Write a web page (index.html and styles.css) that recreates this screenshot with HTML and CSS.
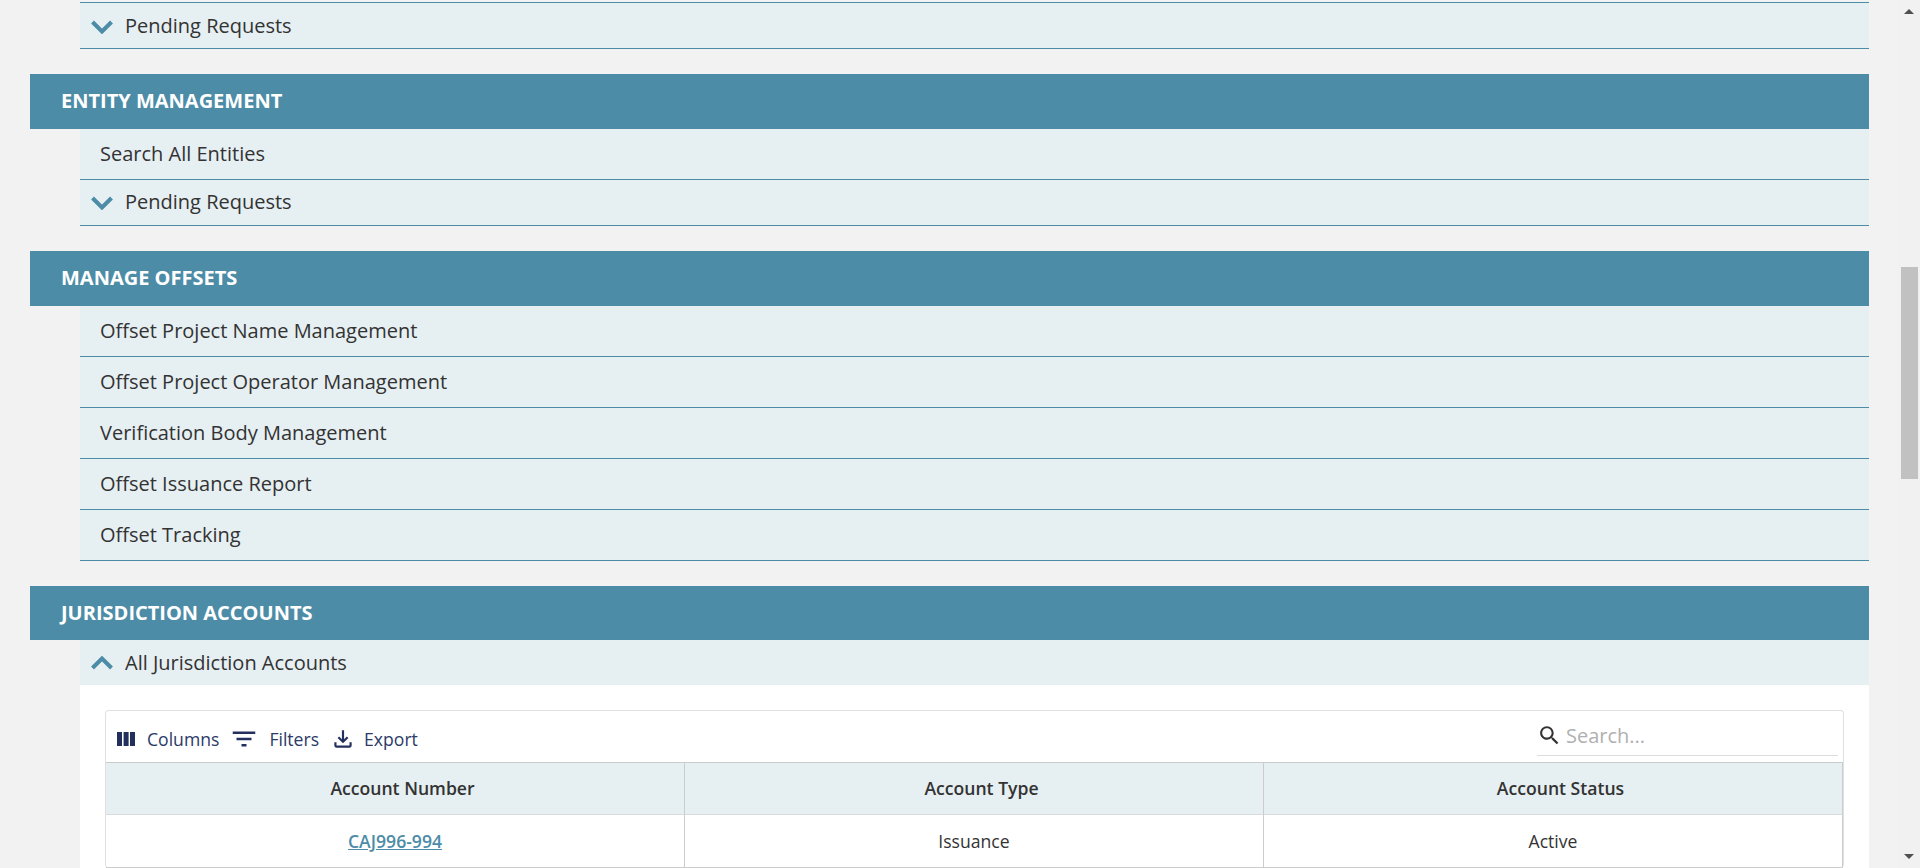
FILE: index.html
```html
<!DOCTYPE html>
<html lang="en">
<head>
<meta charset="utf-8">
<title>Jurisdiction Administration</title>
<link rel="stylesheet" href="styles.css">
</head>
<body>
<div class="page">
  <main class="content">
    <ul class="rows rows-first">
      <li class="row row-toggle"><svg class="chev" viewBox="0 0 22 14"><path d="M1.5 2L11 11.5 20.5 2"/></svg><span>Pending Requests</span></li>
    </ul>
    <section class="group">
      <h2 class="group-title">ENTITY MANAGEMENT</h2>
      <ul class="rows">
        <li class="row">Search All Entities</li>
        <li class="row row-toggle"><svg class="chev" viewBox="0 0 22 14"><path d="M1.5 2L11 11.5 20.5 2"/></svg><span>Pending Requests</span></li>
      </ul>
    </section>
    <section class="group">
      <h2 class="group-title">MANAGE OFFSETS</h2>
      <ul class="rows">
        <li class="row">Offset Project Name Management</li>
        <li class="row">Offset Project Operator Management</li>
        <li class="row">Verification Body Management</li>
        <li class="row">Offset Issuance Report</li>
        <li class="row">Offset Tracking</li>
      </ul>
    </section>
    <section class="group">
      <h2 class="group-title">JURISDICTION ACCOUNTS</h2>
      <div class="row row-toggle row-open"><svg class="chev" viewBox="0 0 22 14"><path d="M1.5 12L11 2.5 20.5 12"/></svg><span>All Jurisdiction Accounts</span></div>
      <div class="panel">
        <div class="grid">
          <div class="toolbar">
            <div class="tools">
              <button class="tool"><svg class="tool-icon" viewBox="0 0 24 24"><path d="M3 5h5v14H3zM9.6 5h5v14h-5zM16 5h5v14h-5z"/></svg>Columns</button>
              <button class="tool"><svg class="tool-icon tool-filter" viewBox="0 0 24 24"><path d="M10 18h4v-2h-4v2zM3 6v2h18V6H3zm3 7h12v-2H6v2z"/></svg>Filters</button>
              <button class="tool"><svg class="tool-icon tool-export" viewBox="0 0 24 24"><path d="M18 15v3H6v-3H4v3c0 1.1.9 2 2 2h12c1.1 0 2-.9 2-2v-3h-2zm-1-4l-1.41-1.41L13 12.17V4h-2v8.17L8.41 9.59 7 11l5 5 5-5z"/></svg>Export</button>
            </div>
            <div class="search">
              <svg class="search-icon" viewBox="0 0 24 24"><path d="M15.5 14h-.79l-.28-.27C15.41 12.59 16 11.11 16 9.5 16 5.91 13.09 3 9.5 3S3 5.91 3 9.5 5.91 16 9.5 16c1.61 0 3.09-.59 4.23-1.57l.27.28v.79l5 4.99L20.49 19l-4.99-5zm-6 0C7.01 14 5 11.99 5 9.5S7.01 5 9.5 5 14 7.01 14 9.5 11.99 14 9.5 14z"/></svg>
              <span class="search-text">Search...</span>
            </div>
          </div>
          <div class="table">
            <div class="cell head">Account Number</div>
            <div class="cell head">Account Type</div>
            <div class="cell head">Account Status</div>
            <div class="cell"><a class="link" href="#">CAJ996-994</a></div>
            <div class="cell">Issuance</div>
            <div class="cell">Active</div>
          </div>
        </div>
      </div>
    </section>
  </main>
  <aside class="scrollbar">
    <span class="arrow arrow-up"></span>
    <span class="thumb"></span>
    <span class="arrow arrow-down"></span>
  </aside>
</div>
</body>
</html>
```
FILE: styles.css
```css
* { box-sizing: border-box; }
html, body { margin: 0; height: 100%; overflow: hidden; }
body { background: #f2f2f2; color: #333; font-family: "Open Sans", "Noto Sans", sans-serif; font-size: 20px; }
.page { display: flex; height: 868px; overflow: hidden; }
.content { flex: 1; min-width: 0; margin: 0 29px 0 30px; padding-top: 2.4px; }
.rows { list-style: none; margin: 0 0 0 50px; padding: 0; }
.rows-first { border-top: 1px solid #4d8ca6; }
.row { display: flex; align-items: center; height: 51px; padding-left: 20px; background: #e6eff2; border-bottom: 1px solid #4d8ca6; }
.row-toggle { height: 46px; padding: 0 0 1.4px 11px; }
.row-open { height: 45px; margin-left: 50px; padding-bottom: 0; border-bottom: 0; }
.chev { width: 22px; height: 14px; margin: 3.4px 12px 0 0; fill: none; stroke: #4d8ca6; stroke-width: 4; flex: none; }
.row-open .chev { margin-top: 0; }
.group { margin-top: 25px; }
.group-title { margin: 0; height: 54.6px; padding: 0 0 1.6px 31px; display: flex; align-items: center; background: #4d8ca6; color: #fff; font-size: 20px; font-weight: 700; }
.panel { margin-left: 50px; background: #fff; padding: 25px 25px 0; height: 300px; }
.grid { border: 1px solid #e0e0e0; border-radius: 4px; border-bottom: 0; }
.toolbar { display: flex; justify-content: space-between; height: 51px; }
.tools { display: flex; align-items: center; padding: 4px 0 0 8px; gap: 10px; }
.tool { display: flex; align-items: center; border: 0; background: none; padding: 0; color: #2b3a67; font: 17.6px "Open Sans", sans-serif; }
.tool-icon { width: 24px; height: 24px; fill: #23305e; margin-right: 9px; flex: none; }
.tool-filter { width: 30px; height: 30px; margin-right: 10px; }
.tool-export { width: 26px; height: 26px; margin: 0 8px 0 1px; }
.search { width: 301px; height: 45px; margin-right: 5px; padding-top: 4px; border-bottom: 1px solid #ddd; display: flex; align-items: center; }
.search-icon { width: 25px; height: 25px; fill: #333; margin-right: 4px; flex: none; }
.search-text { color: #b0b0b0; font-size: 20px; }
.table { display: grid; grid-template-columns: repeat(3, 1fr); border-top: 1px solid #ccc; font-size: 17.6px; }
.cell { height: 53px; display: flex; align-items: center; justify-content: center; border-right: 1px solid #ccc; border-bottom: 1px solid #ccc; }
.head { height: 52px; padding: 0 0 1px 15px; background: #e6eff2; font-weight: 600; border-bottom-color: #d8dcdd; }
.link { color: #4d8ca6; font-weight: 600; }
.scrollbar { width: 22px; flex: none; position: relative; background: #f1f1f1; }
.thumb { position: absolute; top: 267px; left: 3px; width: 17px; height: 212px; background: #c1c1c1; }
.arrow { position: absolute; left: 6px; width: 0; height: 0; border-left: 5px solid transparent; border-right: 5px solid transparent; }
.arrow-up { top: 9px; border-bottom: 5px solid #505050; }
.arrow-down { bottom: 9px; border-top: 5px solid #505050; }
```
